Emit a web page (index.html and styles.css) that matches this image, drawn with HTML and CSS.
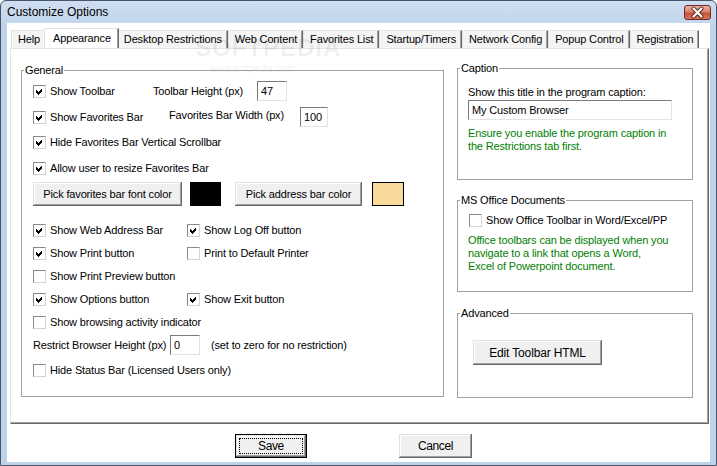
FILE: index.html
```html
<!DOCTYPE html>
<html lang="en">
<head>
    <meta charset="UTF-8">
    <title>Customize Options</title>
    <link rel="stylesheet" href="styles.css">
</head>
<body>
    <div class="window">
        <div class="titlebar">
            <span class="title">Customize Options</span>
            <div class="close-btn">
                <svg width="25" height="13" viewBox="0 0 25 13">
                    <path d="M8.5 2.5 L16.5 10.5 M16.5 2.5 L8.5 10.5" stroke="#5a2a22" stroke-width="4" stroke-linecap="round"/>
                    <path d="M8.5 2.5 L16.5 10.5 M16.5 2.5 L8.5 10.5" stroke="#fff" stroke-width="2.2" stroke-linecap="round"/>
                </svg>
            </div>
        </div>

        <div class="client">
            <div class="watermark">SOFTPEDIA</div>
            <div class="watermark-url">www.softpedia.com</div>

            <div class="tabs">
                <div class="tab">Help</div>
                <div class="tab active">Appearance</div>
                <div class="tab">Desktop Restrictions</div>
                <div class="tab">Web Content</div>
                <div class="tab">Favorites List</div>
                <div class="tab">Startup/Timers</div>
                <div class="tab">Network Config</div>
                <div class="tab">Popup Control</div>
                <div class="tab">Registration</div>
            </div>

            <div class="page">
                <fieldset class="group general">
                    <legend>General</legend>
                    <div class="body general-body">
                        <div class="row">
                            <label class="check w-toolbar"><span class="cb on"><svg viewBox="0 0 11 11"><polygon points="2,4 4,6 8,2 8,5 4,9 2,7"/></svg></span>Show Toolbar</label>
                            <span class="lbl w-height">Toolbar Height (px)</span>
                            <input class="field w30" value="47">
                        </div>
                        <div class="row mt6">
                            <label class="check w-favbar"><span class="cb on"><svg viewBox="0 0 11 11"><polygon points="2,4 4,6 8,2 8,5 4,9 2,7"/></svg></span>Show Favorites Bar</label>
                            <span class="lbl w-width up2">Favorites Bar Width (px)</span>
                            <input class="field w28" value="100">
                        </div>
                        <div class="row mt5">
                            <label class="check"><span class="cb on"><svg viewBox="0 0 11 11"><polygon points="2,4 4,6 8,2 8,5 4,9 2,7"/></svg></span>Hide Favorites Bar Vertical Scrollbar</label>
                        </div>
                        <div class="row mt6">
                            <label class="check"><span class="cb on"><svg viewBox="0 0 11 11"><polygon points="2,4 4,6 8,2 8,5 4,9 2,7"/></svg></span>Allow user to resize Favorites Bar</label>
                        </div>

                        <div class="colors">
                            <button class="btn pick-font">Pick favorites bar font color</button>
                            <span class="swatch black"></span>
                            <button class="btn pick-address">Pick address bar color</button>
                            <span class="swatch peach"></span>
                        </div>

                        <div class="row mt14">
                            <label class="check col1"><span class="cb on"><svg viewBox="0 0 11 11"><polygon points="2,4 4,6 8,2 8,5 4,9 2,7"/></svg></span>Show Web Address Bar</label>
                            <label class="check"><span class="cb on"><svg viewBox="0 0 11 11"><polygon points="2,4 4,6 8,2 8,5 4,9 2,7"/></svg></span>Show Log Off button</label>
                        </div>
                        <div class="row mt3">
                            <label class="check col1"><span class="cb on"><svg viewBox="0 0 11 11"><polygon points="2,4 4,6 8,2 8,5 4,9 2,7"/></svg></span>Show Print button</label>
                            <label class="check"><span class="cb"></span>Print to Default Printer</label>
                        </div>
                        <div class="row mt3">
                            <label class="check"><span class="cb"></span>Show Print Preview button</label>
                        </div>
                        <div class="row mt3">
                            <label class="check col1"><span class="cb on"><svg viewBox="0 0 11 11"><polygon points="2,4 4,6 8,2 8,5 4,9 2,7"/></svg></span>Show Options button</label>
                            <label class="check"><span class="cb on"><svg viewBox="0 0 11 11"><polygon points="2,4 4,6 8,2 8,5 4,9 2,7"/></svg></span>Show Exit button</label>
                        </div>
                        <div class="row mt3">
                            <label class="check"><span class="cb"></span>Show browsing activity indicator</label>
                        </div>
                        <div class="row mt3">
                            <span class="lbl w-restrict">Restrict Browser Height (px)</span>
                            <input class="field w30" value="0">
                            <span class="hint">(set to zero for no restriction)</span>
                        </div>
                        <div class="row mt5">
                            <label class="check"><span class="cb"></span>Hide Status Bar (Licensed Users only)</label>
                        </div>
                    </div>
                </fieldset>

                <div class="side">
                    <fieldset class="group caption">
                        <legend>Caption</legend>
                        <div class="body caption-body">
                            <div class="caption-label">Show this title in the program caption:</div>
                            <input class="field caption-field" value="My Custom Browser">
                            <p class="note caption-note">Ensure you enable the program caption in<br>the Restrictions tab first.</p>
                        </div>
                    </fieldset>

                    <fieldset class="group office">
                        <legend>MS Office Documents</legend>
                        <div class="body office-body">
                            <div class="row mt3">
                                <label class="check"><span class="cb"></span>Show Office Toolbar in Word/Excel/PP</label>
                            </div>
                            <p class="note office-note">Office toolbars can be displayed when you<br>navigate to a link that opens a Word,<br>Excel of Powerpoint document.</p>
                        </div>
                    </fieldset>

                    <fieldset class="group advanced">
                        <legend>Advanced</legend>
                        <div class="body advanced-body">
                            <button class="btn edit-html">Edit Toolbar HTML</button>
                        </div>
                    </fieldset>
                </div>
            </div>

            <div class="actions">
                <button class="btn dialog-btn default">Save</button>
                <button class="btn dialog-btn">Cancel</button>
            </div>
        </div>
    </div>
</body>
</html>
```

FILE: styles.css
```css
* {
    box-sizing: border-box;
}
body {
    margin: 0;
    font-family: "Liberation Sans", Arial, sans-serif;
    font-size: 11px;
    letter-spacing: -0.15px;
    color: #000;
    background: #fff;
}
.window {
    width: 717px;
    height: 466px;
    border: 1px solid #47556a;
    border-radius: 6px 6px 0 0;
    background: linear-gradient(#cfdef1, #bdd3eb 30px, #bdd3eb);
    padding: 0 6px 3px;
    display: flex;
    flex-direction: column;
    overflow: hidden;
}
.titlebar {
    height: 22px;
    display: flex;
    align-items: center;
    justify-content: space-between;
}
.title {
    font-size: 12px;
    letter-spacing: 0;
}
.close-btn {
    width: 27px;
    height: 15px;
    margin-right: -1px;
    border: 1px solid #6e2b21;
    border-radius: 3px;
    background: linear-gradient(#eeb2a2, #dc806b 45%, #c9513a 55%, #d8765c);
    display: flex;
}
.client {
    flex: 1;
    background: #fff;
    position: relative;
}

/* tabs */
.tabs {
    height: 25px;
    display: flex;
    align-items: flex-end;
    padding-left: 4px;
    position: relative;
}
.tab {
    height: 18px;
    line-height: 17px;
    padding: 0 5px 0 6px;
    background: #f4f4f4;
    border-top: 1px solid #e3e3e3;
    border-left: 1px solid #e3e3e3;
    border-right: 1px solid #696969;
    box-shadow: inset -1px 0 #a0a0a0;
    white-space: nowrap;
}
.tab.active {
    height: 20px;
    line-height: 18px;
    background: #fff;
    margin: 0 -2px;
    padding: 0 7px 0 8px;
    position: relative;
    z-index: 1;
}

/* page */
.page {
    margin-left: 3px;
    width: 699px;
    height: 376px;
    border: 1px solid;
    border-color: #e3e3e3 #696969 #696969 #e3e3e3;
    box-shadow: inset -1px -1px #a0a0a0;
    padding: 15px 0 0 10px;
    display: flex;
    align-items: flex-start;
    gap: 13px;
    position: relative;
}
.group {
    margin: 0;
    padding: 0;
    border: 1px solid #a0a0a0;
    min-width: 0;
}
.group legend {
    margin-left: 2px;
    padding: 0 1px;
    line-height: 13px;
}
.general {
    width: 423px;
    height: 333px;
}
.general-body {
    padding: 4px 0 0 11px;
}
.row {
    display: flex;
    align-items: center;
    height: 20px;
}
.mt3 { margin-top: 3px; }
.mt5 { margin-top: 5px; }
.mt6 { margin-top: 6px; }
.mt14 { margin-top: 14px; }
.up2 { margin-top: -4px; }

.check {
    display: flex;
    align-items: center;
    gap: 4px;
    white-space: nowrap;
}
.cb {
    width: 13px;
    height: 13px;
    flex: none;
    border: 1px solid;
    border-color: #8a8a8a #d4d4d4 #d4d4d4 #8a8a8a;
    background: #fff;
    display: flex;
}
.cb svg {
    width: 11px;
    height: 11px;
    shape-rendering: crispEdges;
}
.cb polygon {
    fill: #000;
}
.w-toolbar { width: 120px; }
.w-height { width: 104px; }
.w-favbar { width: 136px; }
.w-width { width: 131px; }
.w-restrict { width: 137px; }
.col1 { width: 154px; }
.lbl {
    white-space: nowrap;
}
.hint {
    margin-left: 11px;
}
.field {
    height: 20px;
    border: 1px solid;
    border-color: #7a7a7a #e3e3e3 #e3e3e3 #7a7a7a;
    font: 11px "Liberation Sans", Arial, sans-serif;
    letter-spacing: -0.15px;
    padding: 0 3px;
    outline: none;
}
.w30 { width: 30px; }
.w28 { width: 28px; }

.btn {
    height: 24px;
    padding: 0;
    border: none;
    background: #f0f0f0;
    box-shadow: inset -1px -1px #696969, inset 1px 1px #e3e3e3, inset -2px -2px #a0a0a0, inset 2px 2px #fff;
    font: 11px "Liberation Sans", Arial, sans-serif;
    letter-spacing: -0.15px;
    color: #000;
}
.colors {
    display: flex;
    align-items: center;
    margin-top: 4px;
}
.pick-font {
    width: 149px;
}
.pick-address {
    width: 127px;
    margin-left: 14px;
}
.swatch {
    width: 31px;
    height: 24px;
    margin-left: 8px;
    border: 1px solid #000;
}
.black {
    background: #000;
}
.peach {
    width: 32px;
    margin-left: 10px;
    background: #f9da9b;
}

/* right column */
.side {
    width: 236px;
    display: flex;
    flex-direction: column;
    margin-top: -2px;
}
.caption {
    height: 118px;
}
.caption-body {
    padding-left: 10px;
}
.caption-label {
    margin-top: 11px;
    line-height: 13px;
}
.caption-field {
    width: 204px;
    margin-top: 1px;
}
.note {
    color: #008000;
    line-height: 13px;
    margin: 0;
}
.caption-note {
    margin-top: 7px;
}
.office {
    height: 98px;
    margin-top: 14px;
}
.office-body {
    padding-left: 11px;
}
.office-note {
    margin-top: 4px;
    margin-left: -1px;
}
.advanced {
    height: 91px;
    margin-top: 15px;
}
.advanced-body {
    padding-left: 15px;
}
.edit-html {
    width: 129px;
    height: 25px;
    margin-top: 20px;
    font-size: 12px;
}

/* dialog buttons */
.actions {
    display: flex;
    justify-content: center;
    gap: 92px;
    margin-top: 10px;
    padding-right: 10px;
}
.dialog-btn {
    width: 73px;
    height: 24px;
    font-size: 12px;
    letter-spacing: -0.4px;
}
.default {
    width: 72px;
    border: 1px solid #000;
    position: relative;
}
.default::after {
    content: "";
    position: absolute;
    left: 3px;
    top: 3px;
    right: 3px;
    bottom: 3px;
    border: 1px dotted #000;
}

/* faint site watermark over the dialog */
.watermark {
    position: absolute;
    left: 188px;
    top: 11px;
    font-size: 24px;
    font-weight: bold;
    letter-spacing: 1px;
    color: rgba(0, 0, 0, 0.06);
    pointer-events: none;
    z-index: 2;
}
.watermark-url {
    position: absolute;
    left: 203px;
    top: 40px;
    font-size: 10px;
    color: rgba(0, 0, 0, 0.08);
    pointer-events: none;
    z-index: 2;
}
```
